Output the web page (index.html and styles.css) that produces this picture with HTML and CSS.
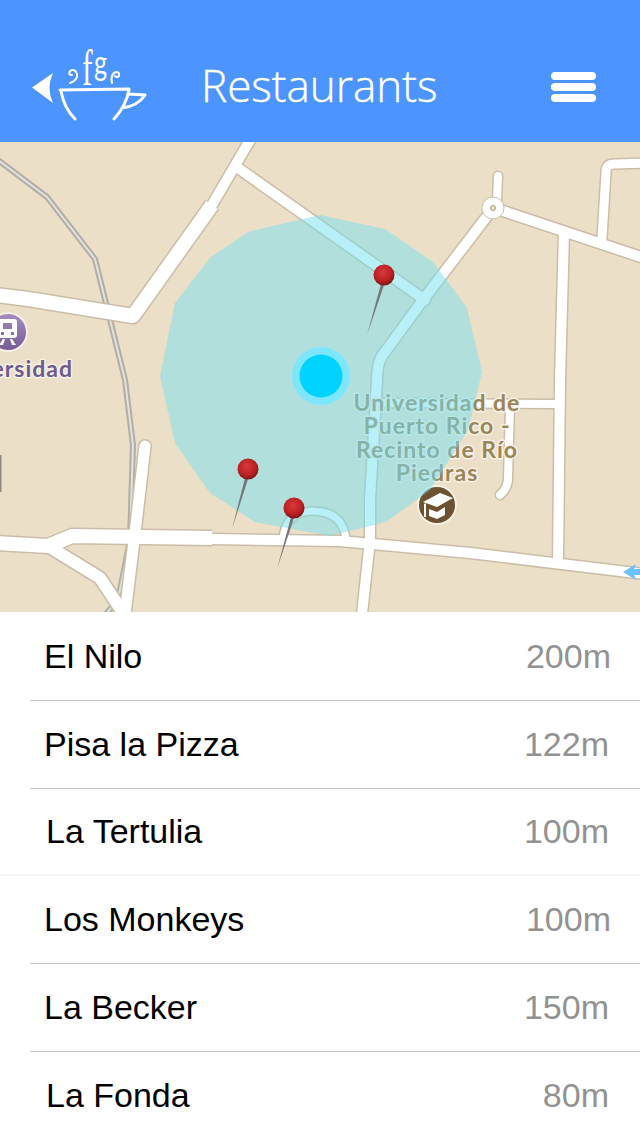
FILE: index.html
```html
<!DOCTYPE html>
<html lang="en">
<head>
    <meta charset="UTF-8">
    <meta name="viewport" content="width=device-width, initial-scale=1.0">
    <title>Restaurants</title>
    <link rel="stylesheet" href="styles.css">
</head>
<body>
    <header class="app-header">
        <svg class="logo" width="150" height="112" viewBox="0 30 150 112">
            <!-- back arrow -->
            <path class="logo-fill" d="M32 87.500 L53 73 Q46 88 53 103 Z"/>
            <!-- cup -->
            <path class="logo-line" d="M60 90 L129 89 M61 91 Q64 108 75 119 M129 90 Q126 106 114 119 M129 94 L145 95 Q138 106 122 108"/>
            <!-- steam -->
            <path class="logo-curl" d="M70 83 Q78 80 77 74 Q75 68 70 71 Q68 75 72 75 M112 83 Q110 74 116 72 Q120 72 119 76 Q117 78 115 76"/>
            <text class="logo-f" transform="translate(82 85) scale(0.62 1)">f</text>
            <text class="logo-g" transform="translate(94 75) scale(0.72 1)">g</text>
        </svg>
        <h1 class="app-title">Restaurants</h1>
        <div class="menu-icon"><span></span><span></span><span></span></div>
    </header>

    <div class="map">
        <svg class="map-svg" width="640" height="470" viewBox="0 142 640 470">
            <defs>
                <radialGradient id="pinHead" cx="45%" cy="38%" r="65%">
                    <stop offset="0%" stop-color="#d63a3a"/>
                    <stop offset="65%" stop-color="#bc1f22"/>
                    <stop offset="100%" stop-color="#6e1414"/>
                </radialGradient>
                <linearGradient id="trainBg" x1="0" y1="0" x2="0" y2="1">
                    <stop offset="0%" stop-color="#a78ec0"/>
                    <stop offset="100%" stop-color="#755a96"/>
                </linearGradient>
            </defs>

            <!-- rail line -->
            <path class="rail-out" d="M-2 160 L47 197 L95 259 L125 380 L133 445 L130 540 L118 600 L106 614"/>
            <path class="rail-in" d="M-2 160 L47 197 L95 259 L125 380 L133 445 L130 540 L118 600 L106 614"/>

            <!-- road casings -->
            <g class="casing">
                <path class="w-14 butt" d="M-4 295 L28 299 L133 316 L212 205"/>
                <path class="w-10" d="M212 205 L250 140"/>
                <path class="w-10" d="M238 168 L425 300"/>
                <path class="w-10" d="M488 215 L423 300 L382 356 Q377 364 377 380 L370 500 L370 540 L362 614"/>
                <path class="w-8" d="M497 200 L498 176"/>
                <path class="w-10" d="M500 210 L644 258"/>
                <path class="w-10" d="M564 232 L560 380 L558 562"/>
                <path class="w-9" d="M602 238 L606 172 Q606 164 614 164 L644 163"/>
                <path class="w-8" d="M378 403 L560 404"/>
                <path class="w-8" d="M510 406 L508 478 Q508 488 500 495"/>
                <path class="w-14 butt" d="M-4 543 L48 546 L72 536 L212 538"/>
                <path class="w-10" d="M212 539 L340 541 L470 553 L644 574"/>
                <path class="w-12" d="M48 546 L100 578 L124 614"/>
                <path class="w-11" d="M145 446 L135 533 L125 614"/>
                <path class="w-7" d="M283 538 Q286 512 312 511 Q342 511 346 538"/>
            </g>
            <!-- road fills, same lines on top -->
            <g class="road">
                <path class="w-14 butt" d="M-4 295 L28 299 L133 316 L212 205"/>
                <path class="w-10" d="M212 205 L250 140"/>
                <path class="w-10" d="M238 168 L425 300"/>
                <path class="w-10" d="M488 215 L423 300 L382 356 Q377 364 377 380 L370 500 L370 540 L362 614"/>
                <path class="w-8" d="M497 200 L498 176"/>
                <path class="w-10" d="M500 210 L644 258"/>
                <path class="w-10" d="M564 232 L560 380 L558 562"/>
                <path class="w-9" d="M602 238 L606 172 Q606 164 614 164 L644 163"/>
                <path class="w-8" d="M378 403 L560 404"/>
                <path class="w-8" d="M510 406 L508 478 Q508 488 500 495"/>
                <path class="w-14 butt" d="M-4 543 L48 546 L72 536 L212 538"/>
                <path class="w-10" d="M212 539 L340 541 L470 553 L644 574"/>
                <path class="w-12" d="M48 546 L100 578 L124 614"/>
                <path class="w-11" d="M145 446 L135 533 L125 614"/>
                <path class="w-7" d="M283 538 Q286 512 312 511 Q342 511 346 538"/>
            </g>

            <!-- roundabout -->
            <circle class="roundabout" cx="493" cy="208" r="11"/>
            <circle class="roundabout-hole" cx="493" cy="208" r="2.500"/>

            <rect class="edge-mark" x="0" y="455" width="1.500" height="37"/>
            <path class="one-way" d="M623 572 L636 564 L634 569 L640 569 L640 575 L634 575 L636 580 Z"/>

            <!-- station -->
            <circle class="poi-train" cx="8" cy="332" r="19"/>
            <path class="train-glyph" d="M1 319 H14 Q17 319 17 322 V335 Q17 338 14 338 H1 Q-2 338 -2 335 V322 Q-2 319 1 319 Z M3 323 V329 H12 V323 Z M1 332 V335 H4 V332 Z M11 332 V335 H14 V332 Z M-1 345 L3 339 H5 L3 345 Z M16 345 L12 339 H10 L12 345 Z"/>
            <text class="poi-station" x="73" y="377" text-anchor="end">Universidad</text>

            <!-- campus -->
            <text class="poi-campus" x="437" y="411" text-anchor="middle">Universidad de</text>
            <text class="poi-campus" x="437" y="434" text-anchor="middle">Puerto Rico -</text>
            <text class="poi-campus" x="437" y="458" text-anchor="middle">Recinto de Río</text>
            <text class="poi-campus" x="437" y="481" text-anchor="middle">Piedras</text>
            <circle class="poi-school" cx="437" cy="505" r="19"/>
            <path class="cap-glyph" d="M423 502 L440 493 L453 498 L437 507 Z M424 504 L426 503 V517 H424 Z M429 509 L437 512 L445 507 V515 L437 519 L429 516 Z"/>

            <!-- search radius, over the map labels -->
            <polygon class="radius" points="320,215 385,229 433,262 467,308 482,372 468,430 430,490 386,522 330,536 255,522 210,493 175,443 160,376 175,303 210,258 248,232"/>

            <!-- current position -->
            <circle class="me-ring" cx="321" cy="376" r="29"/>
            <circle class="me-dot" cx="321" cy="376" r="21.500"/>

            <!-- pins -->
            <g>
                <polygon class="needle" points="381,284 384,285 367,335"/>
                <circle class="pin-head" cx="384" cy="275" r="10.500"/>
                <polygon class="needle" points="245,478 248,479 232,529"/>
                <circle class="pin-head" cx="248" cy="469" r="10.500"/>
                <polygon class="needle" points="291,517 294,518 277,569"/>
                <circle class="pin-head" cx="294" cy="508" r="10.500"/>
            </g>
        </svg>
    </div>

    <ul class="place-list">
        <li class="place"><span>El Nilo</span><span class="dist dist-far">200m</span></li>
        <li class="place"><span>Pisa la Pizza</span><span class="dist">122m</span></li>
        <li class="place place-end"><span class="name-in">La Tertulia</span><span class="dist">100m</span></li>
        <li class="place"><span>Los Monkeys</span><span class="dist dist-far">100m</span></li>
        <li class="place"><span>La Becker</span><span class="dist">150m</span></li>
        <li class="place place-last"><span class="name-in">La Fonda</span><span class="dist">80m</span></li>
    </ul>
</body>
</html>
```

FILE: styles.css
```css
html, body {
    margin: 0;
    padding: 0;
    background-color: #fff;
    overflow: hidden;
}
body {
    width: 640px;
    height: 1138px;
    font-family: "Liberation Sans", Arial, sans-serif;
}

/* header */
.app-header {
    height: 142px;
    box-sizing: border-box;
    padding-top: 30px;
    background-color: #4c94ff;
    display: flex;
    align-items: center;
    color: #fff;
}
.logo {
    display: block;
    flex: none;
}
.logo-fill {
    fill: #fff;
}
.logo-line, .logo-curl {
    fill: none;
    stroke: #fff;
    stroke-linecap: round;
    stroke-linejoin: round;
}
.logo-line {
    stroke-width: 3;
}
.logo-curl {
    stroke-width: 2;
}
.logo-f {
    font-family: "Liberation Serif", serif;
    font-size: 51px;
    fill: #fff;
}
.logo-g {
    font-family: "Lato", sans-serif;
    font-size: 35px;
    fill: #fff;
}
.app-title {
    margin: 0 0 3px 51px;
    font-family: "Open Sans", sans-serif;
    font-weight: 300;
    font-size: 44px;
    line-height: 1;
    -webkit-text-stroke: 0.4px #fff;
    flex: 1;
}
.menu-icon {
    display: flex;
    flex-direction: column;
    gap: 3px;
    width: 45px;
    margin-top: 2px;
    margin-right: 44px;
}
.menu-icon span {
    display: block;
    height: 8px;
    border-radius: 4px;
    background-color: #fff;
}

/* map */
.map {
    height: 470px;
    background-color: #ecdfc8;
    overflow: hidden;
}
.map-svg {
    display: block;
}
.rail-out, .rail-in, .casing path, .road path {
    fill: none;
    stroke-linejoin: round;
}
.rail-out {
    stroke: #b0aea6;
    stroke-width: 6;
}
.rail-in {
    stroke: #e4e2dc;
    stroke-width: 2;
}
.casing {
    stroke: #cbbda7;
}
.casing path, .road path {
    stroke-linecap: round;
}
.casing .butt, .road .butt {
    stroke-linecap: butt;
}
.casing .w-7 { stroke-width: 10; }
.casing .w-8 { stroke-width: 11; }
.casing .w-9 { stroke-width: 12; }
.casing .w-10 { stroke-width: 13; }
.casing .w-11 { stroke-width: 14; }
.casing .w-12 { stroke-width: 15; }
.casing .w-14 { stroke-width: 17; }
.road {
    stroke: #fff;
}
.road .w-7 { stroke-width: 7; }
.road .w-8 { stroke-width: 8; }
.road .w-9 { stroke-width: 9; }
.road .w-10 { stroke-width: 10; }
.road .w-11 { stroke-width: 11; }
.road .w-12 { stroke-width: 12; }
.road .w-14 { stroke-width: 14; }
.roundabout {
    fill: #fff;
    stroke: #cbbda7;
    stroke-width: 1;
}
.roundabout-hole {
    fill: #ecdfc8;
    stroke: #a89880;
    stroke-width: 1;
}
.edge-mark {
    fill: #8d8a84;
}
.one-way {
    fill: #6cc0ff;
}
.poi-train {
    fill: url(#trainBg);
    stroke: #f5efe4;
    stroke-width: 2;
}
.train-glyph {
    fill: #fff;
    fill-rule: evenodd;
}
.poi-school {
    fill: #6c5230;
    stroke: #f7f1e4;
    stroke-width: 2;
}
.cap-glyph {
    fill: #fff;
}
.poi-station, .poi-campus {
    font-family: "Lato", sans-serif;
    font-weight: 700;
    font-size: 23px;
    letter-spacing: 1px;
    stroke: #f6f1e6;
    stroke-width: 3px;
    stroke-linejoin: round;
    paint-order: stroke;
}
.poi-station {
    fill: #6e5b8e;
}
.poi-campus {
    fill: #9a8558;
}
.radius {
    fill: rgba(116, 224, 240, 0.5);
}
.me-ring {
    fill: #7de6ff;
}
.me-dot {
    fill: #00d3ff;
}
.needle {
    fill: #77777a;
}
.pin-head {
    fill: url(#pinHead);
}

/* list */
.place-list {
    list-style: none;
    margin: 0;
    padding: 1px 0 0;
}
.place {
    height: 88px;
    box-sizing: border-box;
    margin-left: 30px;
    padding: 0 31px 0 14px;
    border-bottom: 1px solid #c8c8c8;
    display: flex;
    justify-content: space-between;
    align-items: center;
    font-size: 34px;
    color: #000;
}
.place-end {
    height: 87px;
    margin-left: 0;
    padding-left: 44px;
    border-bottom: 2px solid #f7f7f7;
}
.place-last {
    padding-bottom: 2px;
    border-bottom: none;
}
.name-in {
    margin-left: 2px;
}
.dist {
    color: #929292;
}
.dist-far {
    margin-right: -2px;
}
```
